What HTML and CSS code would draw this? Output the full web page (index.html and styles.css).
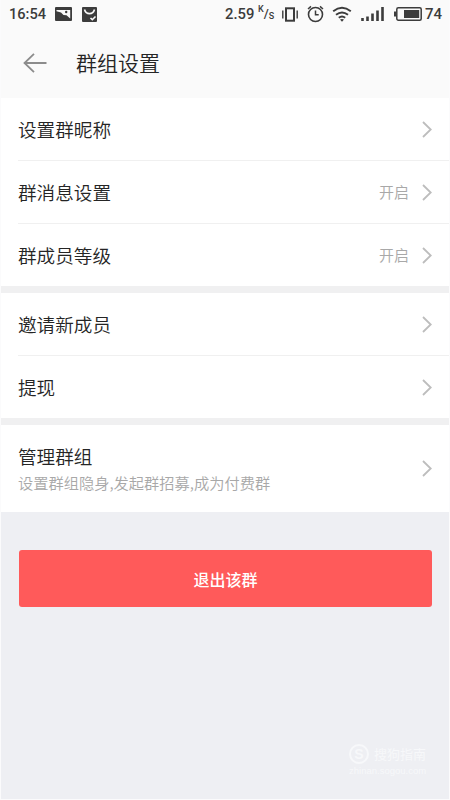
FILE: index.html
```html
<!DOCTYPE html>
<html lang="zh-CN">
<head>
<meta charset="utf-8">
<title>群组设置</title>
<link rel="stylesheet" href="styles.css">
</head>
<body>
<div class="screen">
  <header class="top">
    <div class="status">
      <span class="time">16:54</span>
      <svg class="ic-picture" width="17" height="14" viewBox="0 0 17 14"><rect width="17" height="14" rx="1" fill="#3c3c3c"/><path d="M1.5 3H15.2V11.5L11.5 8.2 8.5 8 6 5.5 1.5 4.2Z" fill="#fafafa"/><circle cx="11.2" cy="5" r="1.2" fill="#3c3c3c"/></svg>
      <svg class="ic-bag" width="15" height="15" viewBox="0 0 15 15"><rect width="15" height="15" rx="1" fill="#3c3c3c"/><path d="M2.5 2.5C4 8 11 8 12.5 2.5M8.5 11l1.8 1.7L13.5 9.5" fill="none" stroke="#fafafa" stroke-width="1.6"/></svg>
      <span class="spacer"></span>
      <span class="speed">2.59</span>
      <span class="unit"><span class="unit-k">K</span><span class="unit-slash">/</span><span class="unit-s">S</span></span>
      <svg class="ic-vibrate" width="16" height="15" viewBox="0 0 16 15"><path d="M.8 3.5v8M15.2 3.5v8" stroke="#3c3c3c" stroke-width="1.4"/><rect x="4" y="1.3" width="8" height="12.4" fill="none" stroke="#3c3c3c" stroke-width="2"/></svg>
      <svg class="ic-alarm" width="17" height="18" viewBox="0 0 17 18"><circle cx="8.5" cy="9.5" r="7" fill="none" stroke="#3c3c3c" stroke-width="1.6"/><path d="M8.5 5.5v4.3h3.2M1 4l3-2.6M16 4l-3-2.6" fill="none" stroke="#3c3c3c" stroke-width="1.5"/></svg>
      <svg class="ic-wifi" width="20" height="16" viewBox="0 0 20 16"><path d="M1.2 5.2Q10-1.8 18.8 5.2M4 8.8Q10 4 16 8.8M6.8 11.8Q10 9.2 13.2 11.8" fill="none" stroke="#3c3c3c" stroke-width="1.9"/><path d="M8 13.6Q10 12.4 12 13.6L10 15.8Z" fill="#3c3c3c"/></svg>
      <svg class="ic-signal" width="23" height="14" viewBox="0 0 23 14"><path d="M1.5 14v-3M6.5 14V9.5M11.5 14V6.5M16.5 14V3.5M21.5 14V0" stroke="#3c3c3c" stroke-width="2.6"/></svg>
      <svg class="ic-battery" width="28" height="14" viewBox="0 0 28 14"><rect x="2.8" y=".8" width="24.4" height="12.4" rx="1.5" fill="none" stroke="#3c3c3c" stroke-width="1.5"/><path d="M0 4.5h2.5v5H0z" fill="#3c3c3c"/><path d="M10 3h15.2v8H10z" fill="#3c3c3c"/></svg>
      <span class="percent">74</span>
    </div>
    <div class="bar">
      <svg class="back" width="24" height="20" viewBox="0 0 24 20"><path d="M23.5 10H1.5M11 .8L1.5 10l9.5 9.2" fill="none" stroke="#8c8c8c" stroke-width="1.8"/></svg>
      <h1>群组设置</h1>
    </div>
  </header>

  <main>
    <section class="group">
      <div class="row"><span class="label">设置群昵称</span><svg class="chev" viewBox="0 0 10 17"><path d="M1 1l7.7 7.5L1 16"/></svg></div>
      <div class="row"><span class="label">群消息设置</span><span class="value">开启</span><svg class="chev" viewBox="0 0 10 17"><path d="M1 1l7.7 7.5L1 16"/></svg></div>
      <div class="row"><span class="label">群成员等级</span><span class="value">开启</span><svg class="chev" viewBox="0 0 10 17"><path d="M1 1l7.7 7.5L1 16"/></svg></div>
    </section>
    <section class="group">
      <div class="row"><span class="label">邀请新成员</span><svg class="chev" viewBox="0 0 10 17"><path d="M1 1l7.7 7.5L1 16"/></svg></div>
      <div class="row"><span class="label">提现</span><svg class="chev" viewBox="0 0 10 17"><path d="M1 1l7.7 7.5L1 16"/></svg></div>
    </section>
    <section class="group">
      <div class="row tall">
        <div class="label"><div class="name">管理群组</div><div class="desc">设置群组隐身,发起群招募,成为付费群</div></div>
        <svg class="chev" viewBox="0 0 10 17"><path d="M1 1l7.7 7.5L1 16"/></svg>
      </div>
    </section>
  </main>

  <div class="action"><button class="quit">退出该群</button></div>

  <div class="mark">
    <div class="mark-top"><span class="mark-s">S</span><span class="mark-name">搜狗指南</span></div>
    <div class="mark-url">zhinan.sogou.com</div>
  </div>
</div>
</body>
</html>
```

FILE: styles.css
```css
* { box-sizing: border-box; }
body { margin: 0; background: #fff; font-family: "Noto Sans CJK SC", sans-serif; }
.screen { position: relative; width: 450px; height: 800px; border: solid #fbfbfc; border-width: 0 1px 1px; background: #eeeff3; overflow: hidden; }
.top { height: 98px; background: #fafafa; }
.status { display: flex; align-items: center; height: 28px; padding: 0 3px 0 8px; font: 500 16px/28px Roboto, sans-serif; color: #3c3c3c; }
.status svg { flex: none; }
.time { width: 38px; font-size: 14.6px; }
.ic-picture { margin-left: 8px; }
.ic-bag { margin-left: 10px; }
.spacer { flex: 1; }
.speed { width: 30px; font-size: 14.8px; }
.unit { display: flex; width: 17px; margin-left: 3px; font-size: 9px; line-height: 12px; }
.unit-k { margin-top: -3px; }
.unit-slash { margin-top: 2px; font-size: 13px; }
.unit-s { margin-top: 4px; }
.ic-vibrate { margin-left: 7px; }
.ic-alarm { margin-left: 9px; }
.ic-wifi { margin-left: 8px; }
.ic-signal { margin-left: 9px; }
.ic-battery { margin-left: 10px; }
.percent { width: 24px; padding-left: 3px; font-size: 15px; }
.bar { display: flex; align-items: center; height: 70px; padding-left: 22px; }
.back { margin-right: 29px; }
h1 { margin: -2px 0 0; font-size: 21px; font-weight: 350; line-height: 30px; color: #252525; }
.group { padding-left: 17px; background: #fff; }
.group + .group { border-top: 7px solid #f0f0f1; }
.row { display: flex; align-items: center; height: 63px; padding-right: 17px; }
.row:first-child { height: 62px; }
.row + .row { border-top: 1px solid #f0f0f0; }
.label { flex: 1; margin-top: -1px; font-size: 18.6px; font-weight: 350; line-height: 28px; color: #252525; }
.value { margin: -1px 13px 0 0; font-size: 15px; font-weight: 350; color: #a8a8a8; }
.chev { flex: none; width: 10px; height: 17px; fill: none; stroke: #bdbdbd; stroke-width: 1.8; }
.row.tall { height: 87px; }
.desc { margin-top: 0; font-size: 15.25px; line-height: 25px; color: #a8a8a8; white-space: nowrap; }
.row.tall .label { margin-top: 0; }
.action { padding: 38px 17px 0 18px; }
.group:nth-child(-n+2) .row:last-child { height: 63px; }
.quit { display: block; width: 100%; height: 57px; padding: 0; border: 0; border-radius: 3px; background: #ff5a5a; color: #fff; font: 500 16px/24px "Noto Sans CJK SC", sans-serif; }
.mark { position: absolute; left: 348px; top: 744px; width: 80px; color: #f7f8fa; }
.mark-top { display: flex; align-items: center; gap: 5px; height: 20px; }
.mark-s { width: 20px; height: 20px; border: 2px solid #f7f8fa; border-radius: 50%; font: 700 14px/16px "Liberation Sans", sans-serif; text-align: center; }
.mark-name { font-size: 13px; line-height: 20px; }
.mark-url { font: 9.5px/14px "Liberation Sans", sans-serif; }
```
